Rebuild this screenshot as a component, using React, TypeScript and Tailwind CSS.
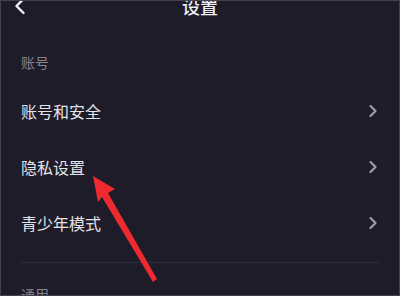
import React from 'react';

const font = { fontFamily: '"Noto Sans CJK SC", "Noto Sans", sans-serif' };

const Chevron: React.FC = () => (
  <svg width="10" height="14" viewBox="0 0 10 14" fill="none">
    <path d="M2.5 2 L7.5 7 L2.5 12" stroke="#9c9ba8" strokeWidth="2.2" strokeLinecap="round" strokeLinejoin="round" />
  </svg>
);

const Row: React.FC<{ label: string }> = ({ label }) => (
  <div className="flex h-[56px] items-center justify-between pl-[20px] pr-[21px]">
    <span className="text-[16px] leading-[20px] text-[#e4e3ea]">{label}</span>
    <Chevron />
  </div>
);

export default function App() {
  return (
    <div
      className="relative h-[296px] w-[400px] overflow-hidden border border-[#43424e] bg-[#1e1c29]"
      style={font}
    >
      <div className="relative -mt-[17px] flex h-[44px] items-center justify-center">
        <svg className="absolute left-[12px]" width="14" height="18" viewBox="0 0 14 18" fill="none">
          <path d="M10.5 2 L3.5 9 L10.5 16" stroke="#f2f2f4" strokeWidth="2.4" strokeLinecap="round" strokeLinejoin="round" />
        </svg>
        <span className="text-[18px] font-medium leading-[24px] text-[#f0eff4]">设置</span>
      </div>

      <div className="px-[20px] pt-[24px] text-[14px] leading-[20px] text-[#85848f]">账号</div>
      <div className="mt-[11px]">
        <Row label="账号和安全" />
        <Row label="隐私设置" />
        <Row label="青少年模式" />
      </div>
      <div className="mx-[20px] mt-[11px] h-px bg-[#2f2d3b]" />
      <div className="px-[20px] pt-[21px] text-[14px] leading-[20px] text-[#85848f]">通用</div>

      <svg className="pointer-events-none absolute left-0 top-0" width="400" height="296" viewBox="0 0 400 296">
        <polygon
          points="92,175 114,188 107,192 156,278 152,281 101,196 97,201"
          fill="#ee2a30"
        />
      </svg>
    </div>
  );
}
